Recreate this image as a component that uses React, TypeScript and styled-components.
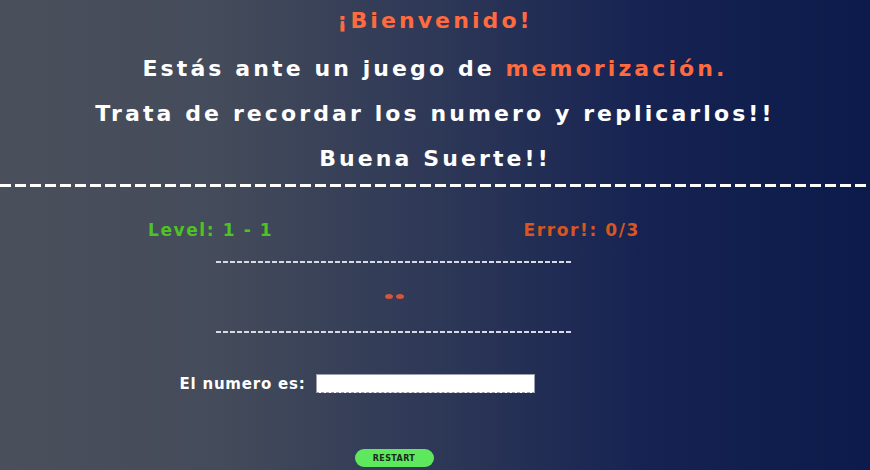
import React from "react";
import styled, { createGlobalStyle } from "styled-components";

const Global = createGlobalStyle`
  html, body { margin: 0; padding: 0; }
  body {
    width: 870px;
    height: 470px;
    overflow: hidden;
    background: linear-gradient(90deg, #4a4f5b 0%, #444b5a 25%, #2e3857 50%, #152252 75%, #0c1b4b 100%);
  }
`;

const Page = styled.div`
  width: 870px;
  height: 470px;
  display: flex;
  flex-direction: column;
  font-family: "DejaVu Sans", "Noto Sans", sans-serif;
  font-weight: 700;
`;

const Header = styled.header`
  display: flex;
  flex-direction: column;
  align-items: center;
  padding-top: 4px;
`;

const Line = styled.h1<{ $color?: string; $h?: number }>`
  margin: 0;
  height: ${(p) => p.$h ?? 45}px;
  font-size: 22px;
  line-height: 34px;
  font-weight: 700;
  color: ${(p) => p.$color || "#ffffff"};
  letter-spacing: 3.1px;
  white-space: nowrap;
`;

const Accent = styled.span`
  color: #ff6b3f;
`;

const BigDash = styled.div`
  height: 3px;
  background: repeating-linear-gradient(90deg, #ffffff 0 11px, transparent 11px 15px);
`;

const Game = styled.section`
  display: flex;
  flex-direction: column;
  align-items: center;
  width: 788px;
`;

const Stats = styled.div`
  display: flex;
  justify-content: space-between;
  width: 492px;
  margin-top: 32px;
`;

const Stat = styled.span<{ $color: string }>`
  font-size: 17px;
  line-height: 22px;
  color: ${(p) => p.$color};
  letter-spacing: 1.6px;
`;

const SmallDash = styled.div<{ $top: number }>`
  width: 357px;
  height: 2px;
  margin-top: ${(p) => p.$top}px;
  background: repeating-linear-gradient(90deg, #d8dbe4 0 5px, transparent 5px 7px);
`;

const Dots = styled.div`
  display: flex;
  gap: 3px;
  margin-top: 31px;
  height: 5px;
`;

const Dot = styled.span`
  width: 8px;
  height: 5px;
  border-radius: 50%;
  background: #d2553e;
`;

const InputRow = styled.div`
  display: flex;
  align-items: center;
  gap: 10px;
  margin-top: 41px;
  margin-right: 74px;
`;

const Label = styled.label`
  font-family: "DejaVu Sans", "Noto Sans", sans-serif;
  font-size: 15px;
  font-weight: 700;
  letter-spacing: 0.8px;
  color: #ffffff;
`;

const Field = styled.input`
  width: 219px;
  height: 19px;
  box-sizing: border-box;
  border: 1px solid #9aa0b0;
  border-bottom: 1px dashed #9aa0b0;
  background: #ffffff;
  padding: 0;
  outline: none;
`;

const Restart = styled.button`
  margin-top: 56px;
  width: 79px;
  height: 18px;
  border: none;
  border-radius: 9px;
  background: #5ee85e;
  color: #1c2a1c;
  font-family: "DejaVu Sans", "Noto Sans", sans-serif;
  font-size: 8px;
  font-weight: 700;
  letter-spacing: 0.4px;
  padding: 0;
`;

export default function App() {
  return (
    <Page>
      <Global />
      <Header>
        <Line $color="#ff6b3f" $h={48}>¡Bienvenido!</Line>
        <Line>
          Estás ante un juego de <Accent>memorización.</Accent>
        </Line>
        <Line>Trata de recordar los numero y replicarlos!!</Line>
        <Line $h={42}>Buena Suerte!!</Line>
      </Header>
      <BigDash />
      <Game>
        <Stats>
          <Stat $color="#4ec324">Level: 1 - 1</Stat>
          <Stat $color="#d8561f">Error!: 0/3</Stat>
        </Stats>
        <SmallDash $top={20} />
        <Dots>
          <Dot />
          <Dot />
        </Dots>
        <SmallDash $top={32} />
        <InputRow>
          <Label htmlFor="num">El numero es:</Label>
          <Field id="num" type="text" />
        </InputRow>
        <Restart>RESTART</Restart>
      </Game>
    </Page>
  );
}
